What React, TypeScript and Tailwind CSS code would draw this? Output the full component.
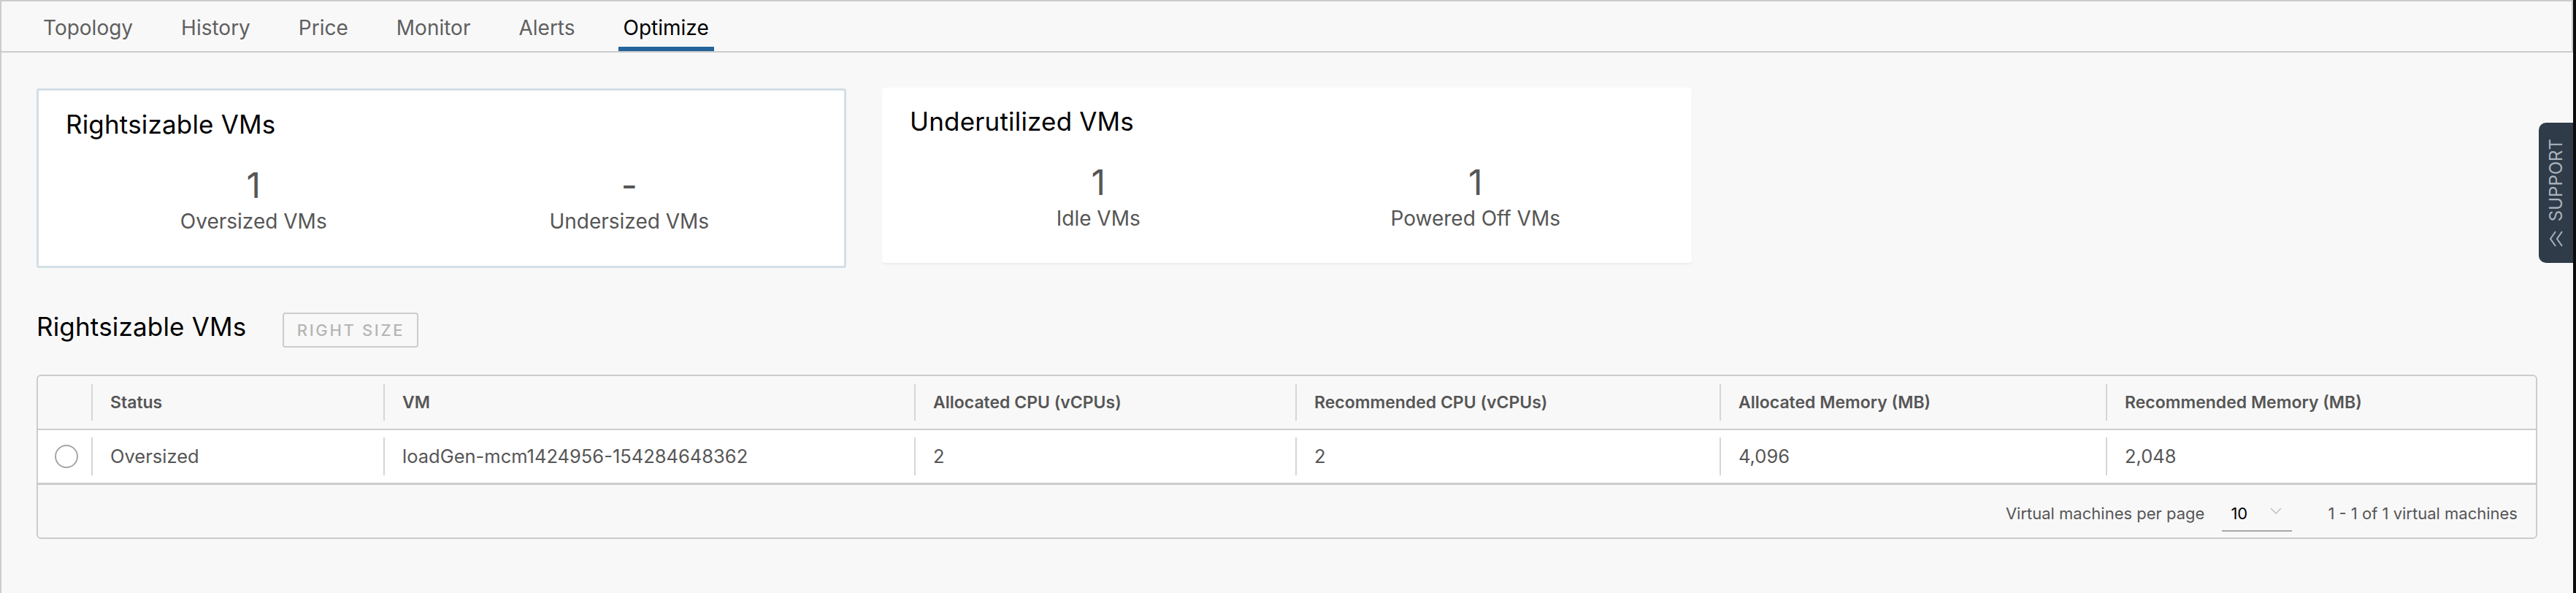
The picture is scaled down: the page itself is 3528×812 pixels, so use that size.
import React from "react";

const tabs = ["Topology", "History", "Price", "Monitor", "Alerts", "Optimize"];

const columns = [
  "Status",
  "VM",
  "Allocated CPU (vCPUs)",
  "Recommended CPU (vCPUs)",
  "Allocated Memory (MB)",
  "Recommended Memory (MB)",
];

const rows = [
  {
    id: "vm-1",
    cells: ["Oversized", "loadGen-mcm1424956-154284648362", "2", "2", "4,096", "2,048"],
  },
];

// fixed column tracks so the separators land where the datagrid puts them
const gridCols = "grid grid-cols-[73px_400px_727px_522px_581px_529px_1fr]";

function StatCard({
  title,
  stats,
  selected,
}: {
  title: string;
  stats: { value: string; label: string }[];
  selected?: boolean;
}) {
  return (
    <div
      className={
        selected
          ? "mt-px h-[246px] w-[1109px] rounded-[4px] border-[3px] border-[#d3dee6] bg-white px-[37px] pt-[29px]"
          : "h-[240px] w-[1109px] rounded-[4px] bg-white px-[38px] pt-[29px] shadow-[0_2px_3px_rgba(0,0,0,0.05)]"
      }
    >
      <h2 className="text-[35px] leading-none tracking-[0.005em] text-black">{title}</h2>
      <div className="mt-[42px] grid grid-cols-2">
        {stats.map((s) => (
          <div key={s.label} className="flex flex-col items-center">
            <span className="text-[48px] leading-none text-[#565656]">{s.value}</span>
            <span className="mt-[11px] text-[28px] leading-none text-[#565656]">{s.label}</span>
          </div>
        ))}
      </div>
    </div>
  );
}

function Cell({ children, sepHeight }: { children: React.ReactNode; sepHeight: string }) {
  return (
    <div className="flex items-center">
      <span className={`${sepHeight} w-[2px] shrink-0 bg-[#d6d6d6]`} />
      <span className="pl-6 whitespace-nowrap">{children}</span>
    </div>
  );
}

export default function App() {
  return (
    <div className="flex min-h-[812px] w-[3528px] bg-black font-['Inter',sans-serif]">
      <div className="relative min-h-[812px] w-[3524px] border-l-2 border-t-2 border-[#cccccc] bg-[#f8f8f8]">
        {/* tabs */}
        <nav className="flex h-[70px] gap-[52px] border-b-2 border-r-2 border-[#cccccc] pl-[50px]">
          {tabs.map((t) => {
            const active = t === "Optimize";
            return (
              <div
                key={t}
                className={
                  active
                    ? "h-[68px] border-b-[6px] border-[#24649a] px-[7px] pt-[22px] text-[28px] leading-none text-black"
                    : "h-[68px] border-b-[6px] border-transparent px-[7px] pt-[22px] text-[28px] leading-none text-[#5f5f5f]"
                }
              >
                {t}
              </div>
            );
          })}
        </nav>

        <main className="px-[48px] pt-[48px]">
          <div className="flex items-start gap-[49px]">
            <StatCard
              selected
              title="Rightsizable VMs"
              stats={[
                { value: "1", label: "Oversized VMs" },
                { value: "-", label: "Undersized VMs" },
              ]}
            />
            <StatCard
              title="Underutilized VMs"
              stats={[
                { value: "1", label: "Idle VMs" },
                { value: "1", label: "Powered Off VMs" },
              ]}
            />
          </div>

          <div className="mt-[61px] flex items-start">
            <h2 className="mt-[2px] text-[35px] leading-none tracking-[0.005em] text-black">Rightsizable VMs</h2>
            <button
              disabled
              className="ml-[50px] h-[48px] w-[186px] rounded-[4px] border-2 border-[#cccccc] text-[22px] font-medium leading-none tracking-[0.12em] text-[#b5b5b5]"
            >
              RIGHT SIZE
            </button>
          </div>

          {/* datagrid */}
          <div className="mt-[37px] w-[3425px] overflow-hidden rounded-[6px] border-2 border-[#cccccc]">
            <div className={`${gridCols} h-[74px] border-b-2 border-[#cccccc] text-[23px] font-semibold leading-none text-[#565656]`}>
              <div />
              {columns.map((c) => (
                <Cell key={c} sepHeight="h-[50px]">
                  {c}
                </Cell>
              ))}
            </div>

            {rows.map((r) => (
              <div
                key={r.id}
                className={`${gridCols} h-[75px] border-b-[3px] border-[#cccccc] bg-white text-[25.5px] leading-none text-[#565656]`}
              >
                <div className="flex items-center pl-[23px]">
                  <span className="h-[32px] w-[32px] rounded-full border-2 border-[#a6a6a6] bg-white" />
                </div>
                {r.cells.map((c, i) => (
                  <Cell key={i} sepHeight="h-[52px]">
                    {c}
                  </Cell>
                ))}
              </div>
            ))}

            <div className="flex h-[72px] items-center justify-end pr-[25px] pt-[6px] text-[22px] leading-none text-[#565656]">
              <span>Virtual machines per page</span>
              <div className="relative ml-[24px] w-[96px] border-b-2 border-[#a8a8a8] pb-[12px] pl-[12px] pt-[14px] text-black">
                10
                <svg
                  className="absolute right-[14px] top-[17px]"
                  width="16"
                  height="9"
                  viewBox="0 0 16 9"
                  fill="none"
                  stroke="#c2c2c2"
                  strokeWidth="1.5"
                >
                  <polyline points="1,1 8,8 15,1" />
                </svg>
              </div>
              <span className="ml-[49px]">1 - 1 of 1 virtual machines</span>
            </div>
          </div>
        </main>

        {/* support drawer handle */}
        <div className="absolute right-0 top-[166px] flex h-[192px] w-[47px] flex-col items-center rounded-l-[10px] bg-[#2f3b48] pt-[22px]">
          <span className="rotate-180 text-[24px] leading-none text-[#a9b3bd] [writing-mode:vertical-rl]">
            SUPPORT
          </span>
          <svg
            className="mt-[13px]"
            width="20"
            height="22"
            viewBox="0 0 20 22"
            fill="none"
            stroke="#a9b3bd"
            strokeWidth="2"
          >
            <polyline points="9,1 2,11 9,21" />
            <polyline points="18,1 11,11 18,21" />
          </svg>
        </div>
      </div>
      <div className="flex-1 bg-[#0d0d0d]" />
    </div>
  );
}
